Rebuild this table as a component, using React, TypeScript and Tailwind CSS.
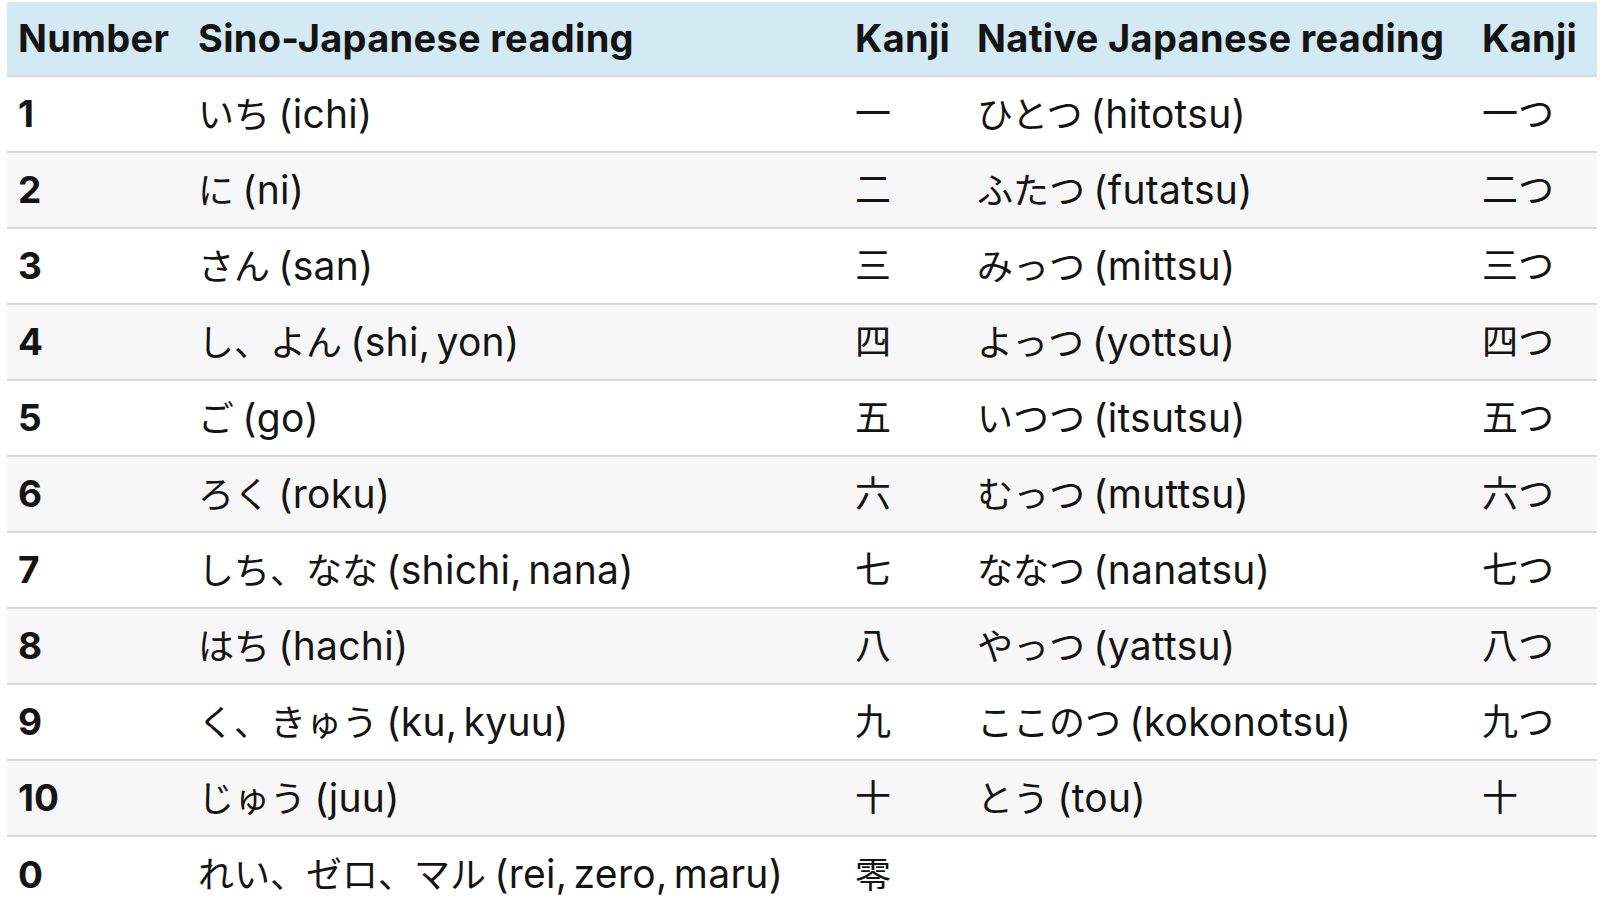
const rows = [
  ["1", "いち", "ichi", "一", "ひとつ", "hitotsu", "一つ"],
  ["2", "に", "ni", "二", "ふたつ", "futatsu", "二つ"],
  ["3", "さん", "san", "三", "みっつ", "mittsu", "三つ"],
  ["4", "し、よん", "shi, yon", "四", "よっつ", "yottsu", "四つ"],
  ["5", "ご", "go", "五", "いつつ", "itsutsu", "五つ"],
  ["6", "ろく", "roku", "六", "むっつ", "muttsu", "六つ"],
  ["7", "しち、なな", "shichi, nana", "七", "ななつ", "nanatsu", "七つ"],
  ["8", "はち", "hachi", "八", "やっつ", "yattsu", "八つ"],
  ["9", "く、きゅう", "ku, kyuu", "九", "ここのつ", "kokonotsu", "九つ"],
  ["10", "じゅう", "juu", "十", "とう", "tou", "十"],
  ["0", "れい、ゼロ、マル", "rei, zero, maru", "零", "", "", ""],
];

// Japanese part and romaji part get slightly different sizes to match the original widths
function Reading({ jp, latin }: { jp: string; latin: string }) {
  if (!jp) return null;
  return (
    <>
      <span className="text-[36px]">{jp}</span>{" "}
      <span className="text-[39px] tracking-[0.3px] [word-spacing:-5px]">({latin})</span>
    </>
  );
}

export default function App() {
  return (
    <div className="min-h-screen bg-white pt-[2px] pl-[7px] font-['Inter','Noto_Sans_CJK_JP',sans-serif] text-[#141414]">
      <table className="w-[1590px] table-fixed border-collapse text-left">
        <colgroup>
          <col className="w-[180px]" />
          <col className="w-[657px]" />
          <col className="w-[122px]" />
          <col className="w-[505px]" />
          <col className="w-[126px]" />
        </colgroup>
        <thead>
          <tr className="h-[74px] bg-[#d3eaf4] text-[38px] font-bold tracking-[0.3px]">
            <th className="pl-[11px] font-bold">Number</th>
            <th className="pl-[11px] font-bold">Sino-Japanese reading</th>
            <th className="pl-[11px] font-bold">Kanji</th>
            <th className="pl-[11px] font-bold">Native Japanese reading</th>
            <th className="pl-[11px] font-bold">Kanji</th>
          </tr>
        </thead>
        <tbody>
          {rows.map((r, i) => (
            <tr
              key={i}
              className={
                "h-[76px] border-t-2 border-[#d9d9d9] text-[36px] " +
                (i % 2 === 1 ? "bg-[#f7f7f7]" : "bg-white")
              }
            >
              <td className="pl-[11px] text-[37px] font-bold">{r[0]}</td>
              <td className="pl-[11px] whitespace-nowrap [word-spacing:-2px]">
                <Reading jp={r[1]} latin={r[2]} />
              </td>
              <td className="pl-[11px]">{r[3]}</td>
              <td className="pl-[11px] whitespace-nowrap [word-spacing:-2px]">
                <Reading jp={r[4]} latin={r[5]} />
              </td>
              <td className="pl-[11px]">{r[6]}</td>
            </tr>
          ))}
        </tbody>
      </table>
    </div>
  );
}
